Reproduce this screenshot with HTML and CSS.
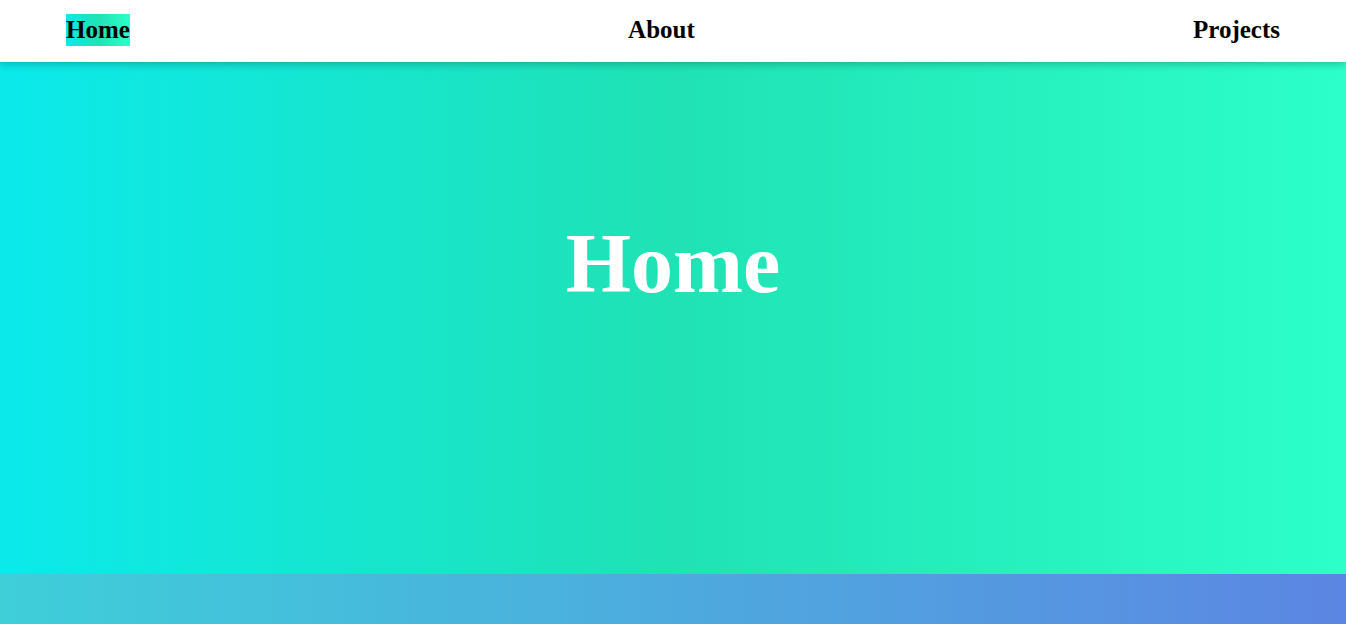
FILE: index.html
```html
<!DOCTYPE html>
<html lang="en">
<head>
<meta charset="utf-8">
<title>Home</title>
<link rel="stylesheet" href="styles.css">
</head>
<body>
<header class="site-header">
  <nav class="nav">
    <a class="nav-link active" href="#home">Home</a>
    <a class="nav-link" href="#about">About</a>
    <a class="nav-link" href="#projects">Projects</a>
  </nav>
</header>
<main>
  <section class="hero" id="home">
    <h1 class="hero-title">Home</h1>
  </section>
  <section class="about" id="about"></section>
</main>
</body>
</html>
```
FILE: styles.css
```css
* { box-sizing: border-box; }
html, body { margin: 0; padding: 0; }
body {
  font-family: "Liberation Serif", "DejaVu Serif", serif;
  background: #fff;
}
.site-header {
  position: relative;
  z-index: 2;
  height: 62px;
  background: #fff;
  box-shadow: 0 2px 8px rgba(0, 0, 0, 0.25);
}
.nav {
  height: 100%;
  display: flex;
  align-items: center;
  justify-content: space-between;
  padding: 0 66px 2px;
}
.nav-link {
  font-size: 25px;
  font-weight: 700;
  color: #000;
  text-decoration: none;
  line-height: 32px;
}
.nav-link.active {
  background: linear-gradient(90deg, #0be9eb 0%, #20e2b4 50%, #2cffca 100%);
}
.hero {
  height: 512px;
  display: flex;
  align-items: center;
  justify-content: center;
  padding-bottom: 108px;
  background: linear-gradient(90deg, #0be9eb 0%, #20e2b4 50%, #2cffca 100%);
}
.hero-title {
  margin: 0;
  color: #fff;
  font-size: 84px;
  font-weight: 700;
  line-height: 1;
}
.about {
  height: 400px;
  background: linear-gradient(90deg, #3ecfd9 0%, #5c86e3 100%);
}
```
